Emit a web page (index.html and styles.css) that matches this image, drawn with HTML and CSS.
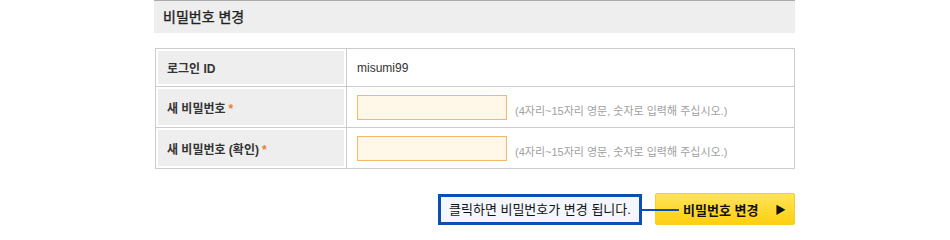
FILE: index.html
```html
<!DOCTYPE html>
<html lang="ko">
<head>
<meta charset="utf-8">
<link rel="stylesheet" href="styles.css">
</head>
<body>
<div class="wrap">
  <h2 class="title">비밀번호 변경</h2>
  <table class="form">
    <tr class="r1">
      <th>로그인 ID</th>
      <td class="val">misumi99</td>
    </tr>
    <tr>
      <th>새 비밀번호<span class="req">*</span></th>
      <td><input class="inp" type="password"><span class="hint">(4자리~15자리 영문, 숫자로 입력해 주십시오.)</span></td>
    </tr>
    <tr>
      <th>새 비밀번호 (확인)<span class="req">*</span></th>
      <td><input class="inp" type="password"><span class="hint">(4자리~15자리 영문, 숫자로 입력해 주십시오.)</span></td>
    </tr>
  </table>
  <div class="actions">
    <div class="btnwrap">
      <button class="btn"><span class="btxt">비밀번호 변경</span><span class="arr">▶</span></button>
      <div class="tip">클릭하면 비밀번호가 변경 됩니다.</div>
      <div class="tipline"></div>
    </div>
  </div>
</div>
</body>
</html>
```
FILE: styles.css
```css
html, body { margin: 0; padding: 0; background: #fff; }
body { font-family: "Liberation Sans", "Noto Sans CJK KR", sans-serif; color: #333; }
.wrap { width: 641px; margin: 0 0 0 154px; }
.title {
  margin: 0;
  height: 32px;
  border-top: 1px solid #aaa;
  background: #eee;
  font-size: 14px;
  font-weight: normal;
  line-height: 32px;
  padding-left: 9px;
  color: #222;
  -webkit-text-stroke: 0.35px #222;
}
.form {
  margin: 15px 0 0 1px;
  width: 640px;
  border-collapse: collapse;
  border: 1px solid #ccc;
}
.form th, .form td { border: 1px solid #ccc; height: 40px; padding: 0; }
.form tr.r1 th, .form tr.r1 td { height: 37px; }
.form th {
  width: 179px;
  background: #eee;
  box-shadow: inset 0 0 0 2px #fff;
  text-align: left;
  padding-left: 11px;
  font-size: 12px;
  font-weight: bold;
  color: #333;
}
.req { color: #e8822a; margin-left: 3px; font-weight: bold; }
.form td { padding-left: 10px; font-size: 12px; color: #333; }
.inp {
  box-sizing: border-box;
  width: 150px;
  height: 25px;
  border: 1px solid #f6b86a;
  background: #fff8e9;
  margin: 0;
  padding: 0 4px;
  vertical-align: middle;
}
.hint { font-size: 11px; color: #a0a0a0; margin-left: 8px; vertical-align: middle; position: relative; top: 3px; }
.actions { display: flex; justify-content: flex-end; margin-top: 24px; }
.btnwrap { position: relative; }
.btn {
  box-sizing: border-box;
  width: 140px;
  height: 32px;
  display: flex;
  align-items: center;
  justify-content: space-between;
  padding: 0 6px 0 27px;
  border: 1px solid #f5cf2a;
  border-radius: 2px;
  background: linear-gradient(#ffe45a, #ffcf10);
  font-family: "Liberation Sans", "Noto Sans CJK KR", sans-serif;
  font-size: 13px;
  font-weight: bold;
  color: #111;
  cursor: pointer;
}
.arr { font-size: 11px; color: #111; margin-right: 2px; }
.tip {
  position: absolute;
  right: 153px;
  top: 1px;
  box-sizing: border-box;
  width: 204px;
  height: 31px;
  border: 3px solid #0b4fb3;
  background: #f3f7fc;
  font-size: 13px;
  color: #111;
  line-height: 25px;
  padding-left: 8px;
  white-space: nowrap;
}
.tipline {
  position: absolute;
  left: -13px;
  top: 16px;
  width: 37px;
  height: 2px;
  background: #0b4fb3;
}
```
